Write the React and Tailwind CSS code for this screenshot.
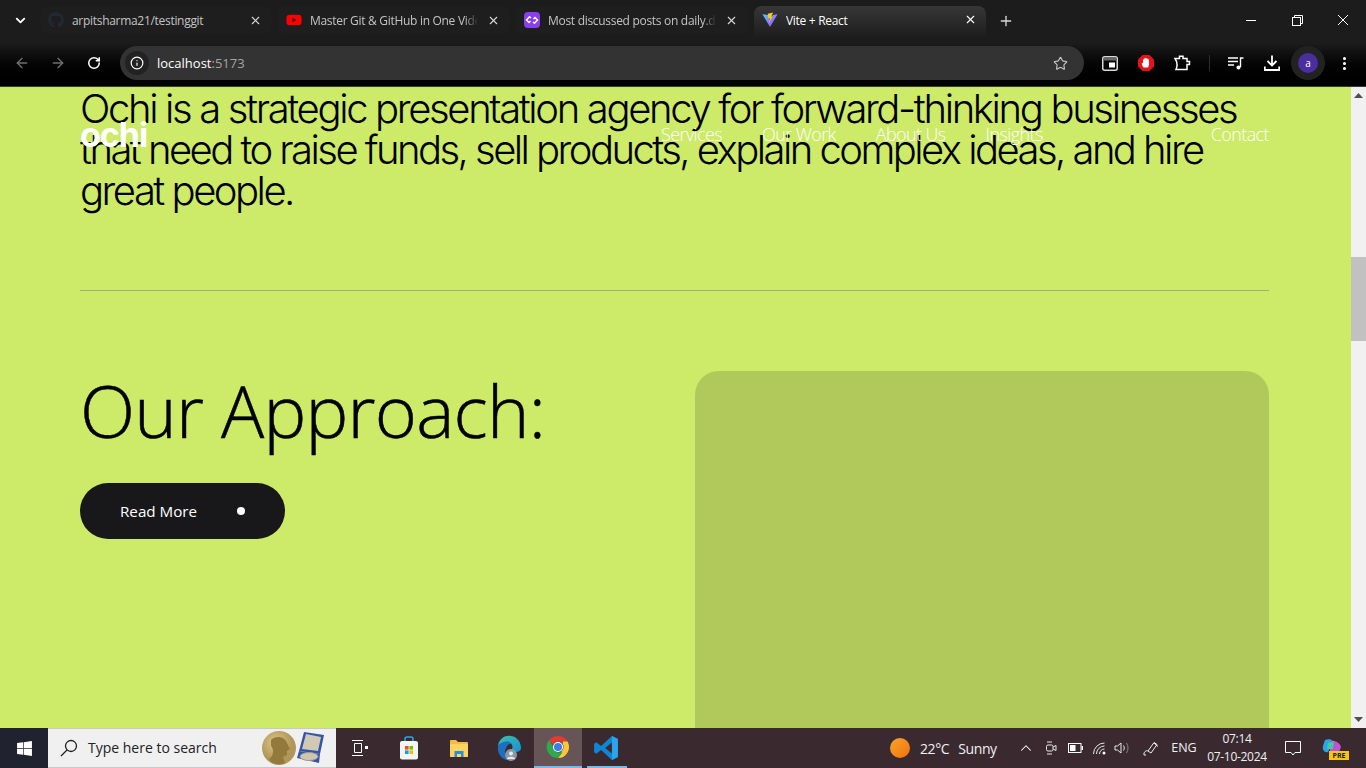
import React from "react";
import { ChevronDown, X, Plus, ArrowLeft, ArrowRight, RotateCw, Info, Star, ChevronUp, EllipsisVertical } from "lucide-react";
import { FaGithub, FaYoutube, FaWindows } from "react-icons/fa";

const ui = { fontFamily: '"Open Sans","Noto Sans",sans-serif' };

function Tab({ title, icon, active, fade }) {
  return (
    <div className={`relative w-[232px] shrink-0 flex pl-[8px] rounded-t-[8px] mt-[6px] ${active ? "h-[34px] items-start pt-[6px] pr-[9px] bg-gradient-to-b from-[#373737] to-[#1b1b1b]" : "h-[28px] items-center pr-[10px] rounded-b-[8px] bg-[#1e1e1e]"}`}>
      <span className="w-[16px] h-[16px] flex items-center justify-center shrink-0">{icon}</span>
      <span className={`ml-[8px] text-[12px] leading-[16px] tracking-[-0.3px] whitespace-nowrap overflow-hidden flex-1 pt-[1px] ${active ? "text-white" : "text-[#c4c4c4]"} ${fade ? "mr-[3px] [mask-image:linear-gradient(to_right,#000_92%,transparent)]" : ""}`}>{title}</span>
      <X size={13} strokeWidth={2} className={`ml-[6px] shrink-0 ${active ? "text-white mt-[1px]" : "text-[#d8d8d8]"}`} />
    </div>
  );
}

function Vite() {
  return (
    <svg width="18" height="18" viewBox="0 0 18 18">
      <path d="M0.5 2.5 L9 17 L17.5 2.5 L12 3.5 L9 10 L7 3.5 Z" fill="url(#vg)" />
      <path d="M6.5 2 L12.5 0.5 L10.5 5 L12 5 L8 12 L8.8 7 L7 7 Z" fill="#ffc81e" />
      <defs>
        <linearGradient id="vg" x1="0" y1="0" x2="1" y2="1">
          <stop offset="0" stopColor="#41d1ff" />
          <stop offset="1" stopColor="#bd34fe" />
        </linearGradient>
      </defs>
    </svg>
  );
}

function Daily() {
  return (
    <svg width="16" height="16" viewBox="0 0 16 16">
      <rect width="16" height="16" rx="4" fill="#8b3df0" />
      <path d="M7 6 L5.5 4.8 L2.5 8 L5 10.5 L6.5 9 M9 10 L10.5 11.2 L13.5 8 L11 5.5 L9.5 7" fill="none" stroke="#fff" strokeWidth="1.5" />
    </svg>
  );
}

function Chrome({ size = 24 }) {
  return (
    <svg width={size} height={size} viewBox="0 0 24 24">
      <path d="M12 1a11 11 0 0 1 9.53 5.5H12a5.5 5.5 0 0 0-5 3.2L3.2 5A11 11 0 0 1 12 1z" fill="#e33b2e" />
      <path d="M21.53 6.5A11 11 0 0 1 12 23l4.76-8.25A5.5 5.5 0 0 0 16.8 9.2L16.76 6.5z" fill="#fcc934" />
      <path d="M12 23A11 11 0 0 1 3.2 5L7.9 13.5a5.5 5.5 0 0 0 4.1 4h4.76z" fill="#2fa84f" />
      <circle cx="12" cy="12" r="5" fill="#fff" />
      <circle cx="12" cy="12" r="4" fill="#3b7de8" />
    </svg>
  );
}

function VSCode() {
  return (
    <svg width="26" height="26" viewBox="0 0 24 24">
      <path d="M17.5 1 L23 3.6 V20.4 L17.5 23 L7.5 13.8 L3 17.3 L1 16 V8 L3 6.7 L7.5 10.2 Z M17.5 7 L11.2 12 L17.5 17 Z" fill="#0e86d4" />
      <path d="M17.5 1 L23 3.6 V20.4 L17.5 23 Z" fill="#2aa5ec" />
    </svg>
  );
}

function Edge() {
  return (
    <svg width="26" height="28" viewBox="0 0 26 28">
      <path d="M2 12 C3 4 10 1 15 2 C22 3 25 9 25 14 C25 17 22 18 19 18 C17 18 15 17 16 15 C18 11 14 7 10 8 C6 9 3 11 2 12 Z" fill="url(#eg)" />
      <path d="M2 12 C1 20 6 26 12 26 C9 23 8 18 10 14 C11 11 14 9 16 10 C13 6 5 7 2 12 Z" fill="#1d6fc4" />
      <circle cx="15" cy="21" r="6" fill="#8b98a4" />
      <circle cx="15" cy="19.5" r="2" fill="#e8eaec" />
      <path d="M11 25 C11 22 19 22 19 25 Z" fill="#e8eaec" />
      <defs>
        <linearGradient id="eg" x1="0" y1="0" x2="1" y2="1">
          <stop offset="0" stopColor="#36c5a8" />
          <stop offset="1" stopColor="#1a8ed8" />
        </linearGradient>
      </defs>
    </svg>
  );
}

function Store() {
  return (
    <svg width="20" height="24" viewBox="0 0 20 24">
      <path d="M6 6 V3 a2 2 0 0 1 2-2 h4 a2 2 0 0 1 2 2 V6" fill="none" stroke="#29a8e8" strokeWidth="1.5" />
      <rect x="1" y="5" width="18" height="18.5" rx="2" fill="#f4f4f4" />
      <rect x="6" y="10" width="3.6" height="3.6" fill="#f25022" />
      <rect x="10.4" y="10" width="3.6" height="3.6" fill="#7fba00" />
      <rect x="6" y="14.4" width="3.6" height="3.6" fill="#00a4ef" />
      <rect x="10.4" y="14.4" width="3.6" height="3.6" fill="#ffb900" />
    </svg>
  );
}

function Folder() {
  return (
    <svg width="20" height="19" viewBox="0 0 20 19">
      <path d="M1 2 a1 1 0 0 1 1-1 h5 l2 2 h9 a1 1 0 0 1 1 1 v13 a1 1 0 0 1-1 1 H2 a1 1 0 0 1-1-1 Z" fill="#f3bc3e" />
      <rect x="1" y="5" width="18" height="13" rx="1" fill="#fbd462" />
      <path d="M5.5 18 v-6 h9 v6 h-2.5 v-3 h-4 v3 Z" fill="#2a8fd8" />
    </svg>
  );
}

function Medal() {
  return (
    <svg width="64" height="34" viewBox="0 0 64 34" className="shrink-0">
      <circle cx="18" cy="17" r="17" fill="url(#mg)" />
      <path d="M10 9 C14 4 24 5 26 12 L29 18 L26 20 L26 24 L22 26 L24 32 C16 35 10 32 8 28 C13 25 13 18 10 15 Z" fill="#94793c" />
      <path d="M43 1 L63 4 L59 23 L38 20 Z" fill="#3356a8" />
      <path d="M45 3 L60 6 L57 20 L41 18 Z" fill="#d3c8b4" />
      <path d="M38 20 L59 23 L58 32 L36 27 Z" fill="#3356a8" />
      <ellipse cx="48" cy="25.5" rx="9" ry="4" fill="#cfc6b2" stroke="#a09880" />
      <defs>
        <radialGradient id="mg" cx="0.4" cy="0.35"><stop offset="0" stopColor="#dcc888" /><stop offset="1" stopColor="#b09658" /></radialGradient>
      </defs>
    </svg>
  );
}

function Slot({ w, children, cls = "" }) {
  return <div className={`relative flex items-center justify-center h-full shrink-0 ${cls}`} style={{ width: w }}>{children}</div>;
}

function BrowserChrome() {
  return (
    <header className="h-[87px] shrink-0 bg-gradient-to-b from-[#1c1c1c] via-[#1c1c1c] to-[#000000] border-b border-[#3a3a3a]" style={ui}>
      <div className="h-[40px] flex">
        <div className="w-[40px] flex items-center justify-center pt-[1px]"><ChevronDown size={15} strokeWidth={3} className="text-white" /></div>
        <div className="flex gap-[6px]">
          <Tab title="arpitsharma21/testinggit" icon={<FaGithub size={16} className="text-[#1f2a36]" />} />
          <Tab fade title="Master Git & GitHub in One Video" icon={<FaYoutube size={18} className="text-[#ff0000]" />} />
          <Tab fade title="Most discussed posts on daily.dev" icon={<Daily />} />
          <Tab active title="Vite + React" icon={<Vite />} />
        </div>
        <div className="ml-[12px] flex items-center pt-[1px]"><Plus size={16} strokeWidth={2} className="text-[#d8d8d8]" /></div>
        <div className="ml-auto flex items-center text-white">
          <Slot w={46}><span className="w-[10px] h-[1px] bg-white" /></Slot>
          <Slot w={46}>
            <svg width="11" height="11" viewBox="0 0 11 11" fill="none" stroke="#fff"><rect x="0.5" y="2.5" width="8" height="8" /><path d="M2.5 2.5 V0.5 H10.5 V8.5 H8.5" /></svg>
          </Slot>
          <Slot w={46}><svg width="12" height="12" viewBox="0 0 12 12" stroke="#fff" fill="none"><path d="M1 1 L11 11 M11 1 L1 11" /></svg></Slot>
        </div>
      </div>
      <div className="h-[46px] flex items-center">
        <div className="w-[120px] h-full flex items-center">
          <ArrowLeft size={16} strokeWidth={2} className="ml-[14px] text-[#6f6f6f]" />
          <ArrowRight size={16} strokeWidth={2} className="ml-[20px] text-[#6f6f6f]" />
          <RotateCw size={14} strokeWidth={2.6} className="ml-[21px] text-white" />
        </div>
        <div className="w-[964px] h-[34px] rounded-full bg-[#333333] flex items-center pl-[5px] pr-[16px]">
          <div className="w-[24px] h-[24px] rounded-full bg-[#222222] flex items-center justify-center"><Info size={14} strokeWidth={2} className="text-white" /></div>
          <span className="ml-[8px] text-[13px] leading-none text-white">localhost<span className="text-[#a5a5a5]">:5173</span></span>
          <Star size={15} strokeWidth={1.8} className="ml-auto text-[#c8c8c8]" />
        </div>
        <div className="flex-1 h-full flex items-center text-white">
          <Slot w={52}>
            <svg width="16" height="15" viewBox="0 0 16 15"><rect x="0.75" y="0.75" width="14.5" height="13.5" rx="2" fill="none" stroke="#d8d8d8" strokeWidth="1.5" /><rect x="1.5" y="1.5" width="13" height="3" fill="#666" /><rect x="7" y="6.5" width="6" height="5" fill="#fff" /></svg>
          </Slot>
          <Slot w={20}>
            <svg width="18" height="18" viewBox="0 0 18 18"><path d="M5.5 1 H12.5 L17 5.5 V12.5 L12.5 17 H5.5 L1 12.5 V5.5 Z" fill="#e8121a" /><path d="M6 13 L4.5 9.5 L6 9 V5.5 H7 V4.5 H8.2 V4 H9.4 V4.5 H10.6 V5.5 H12 V11 L11 13.5 H7 Z" fill="#fff" /></svg>
          </Slot>
          <Slot w={53}>
            <svg width="17" height="16" viewBox="0 0 17 16" fill="none" stroke="#fff" strokeWidth="1.5"><path d="M1 3.5 H5.5 V1.2 H9 V3.5 H13 V6.5 H15.5 V9.5 H13 V14.5 H2 C3.5 11 3.5 7 1 3.5 Z" /></svg>
          </Slot>
          <div className="w-[1px] h-[16px] bg-[#2e2e2e]" />
          <Slot w={52}>
            <svg width="16" height="13" viewBox="0 0 16 13" fill="none" stroke="#fff" strokeWidth="1.4"><path d="M0 1 H10 M0 4.5 H10 M0 8 H6" /><path d="M12.5 10 V1 H15.5" /><circle cx="10.5" cy="10.5" r="2" fill="#fff" stroke="none" /></svg>
          </Slot>
          <Slot w={20}>
            <svg width="16" height="16" viewBox="0 0 16 16" fill="none" stroke="#fff" strokeWidth="1.8"><path d="M8 0.5 V10 M3.5 6 L8 10.5 L12.5 6 M0.8 11.5 V15 H15.2 V11.5" /></svg>
          </Slot>
          <Slot w={52}>
            <div className="w-[34px] h-[34px] rounded-full bg-[#222222] flex items-center justify-center">
              <div className="w-[20px] h-[20px] rounded-full bg-[#4a2ea0] flex items-center justify-center text-[10px] text-white leading-none">a</div>
            </div>
          </Slot>
          <Slot w={20}><EllipsisVertical size={17} strokeWidth={2.4} /></Slot>
        </div>
      </div>
    </header>
  );
}

function Page() {
  return (
    <main className="relative flex-1 min-h-0 overflow-hidden bg-[#cdea68] flex">
      <div className="flex-1 min-w-0 pl-[80px] pr-[82px]">
        <h1 className="pt-[1px] text-[40px] leading-[41px] text-black font-light whitespace-nowrap" style={{ fontFamily: 'Inter,"Liberation Sans",sans-serif' }}>
          <span className="block tracking-[-2.35px]">Ochi is a strategic presentation agency for forward-thinking businesses</span>
          <span className="block tracking-[-2.55px]">that need to raise funds, sell products, explain complex ideas, and hire</span>
          <span className="block tracking-[-2.5px]">great people.</span>
        </h1>
        <div className="mt-[79px] h-[1px] bg-[#a3ae74]" />
        <div className="mt-[80px] flex justify-between" style={ui}>
          <div>
            <h2 className="text-[72px] leading-[78px] font-light tracking-[-0.8px] text-black [-webkit-text-stroke:0.5px_#000]">Our Approach:</h2>
            <button className="mt-[34px] w-[205px] h-[56px] rounded-full bg-[#18181a] text-white flex items-center pl-[40px] pr-[40px] justify-between text-[15.2px]">
              <span>Read More</span>
              <span className="w-[8px] h-[8px] rounded-full bg-white" />
            </button>
          </div>
          <div className="w-[574px] h-[500px] rounded-[24px] bg-[#b1c95a]" />
        </div>
      </div>
      <nav className="absolute left-0 top-[28px] w-[1351px] pl-[80px] pr-[82px] flex items-center text-white" style={ui}>
        <span className="w-[68px] text-[34px] leading-[40px] font-bold tracking-[-1px]" style={{ fontFamily: "Inter,sans-serif" }}>ochi</span>
        <div className="ml-[513px] -mt-[2px] flex gap-[40px] text-[18px] font-light leading-[24px] tracking-[-0.6px]">
          <span>Services</span><span>Our Work</span><span>About Us</span><span>Insights</span>
        </div>
        <span className="ml-auto -mt-[2px] text-[18px] font-light leading-[24px] tracking-[-0.6px]">Contact</span>
      </nav>
      <div className="w-[15px] shrink-0 bg-[#f1f1f1] flex flex-col items-center relative">
        <svg width="9" height="5" viewBox="0 0 9 5" className="mt-[6px]"><path d="M4.5 0 L9 5 H0 Z" fill="#505050" /></svg>
        <div className="mt-[159px] w-full h-[84px] bg-[#c1c1c1]" />
        <svg width="9" height="5" viewBox="0 0 9 5" className="mt-auto mb-[6px]"><path d="M4.5 5 L9 0 H0 Z" fill="#505050" /></svg>
      </div>
    </main>
  );
}

function Taskbar() {
  return (
    <footer className="h-[40px] shrink-0 bg-[#3a2a30] flex items-center text-white" style={ui}>
      <Slot w={48} cls="bg-[#20232f]"><FaWindows size={17} /></Slot>
      <div className="w-[288px] h-full bg-[#f0f0f0] border-y border-[#c8c8c8] flex items-center pl-[12px] text-[#222]">
        <svg width="18" height="18" viewBox="0 0 18 18" fill="none" stroke="#222" strokeWidth="1.3" className="shrink-0"><circle cx="11" cy="7" r="5.5" /><path d="M7 11 L1 17" /></svg>
        <span className="ml-[10px] text-[14px] leading-none">Type here to search</span>
        <span className="ml-auto mr-[11px] flex"><Medal /></span>
      </div>
      <Slot w={48}>
        <svg width="16" height="16" viewBox="0 0 16 16" fill="none" stroke="#fff"><path d="M0 .5 H11 M2.5 3.5 H9.5 V12.5 H2.5 Z M0 15.5 H11" /><rect x="13" y="6" width="3" height="3" fill="#fff" stroke="none" /></svg>
      </Slot>
      <Slot w={50}><Store /></Slot>
      <Slot w={50}><Folder /></Slot>
      <Slot w={50}><Edge /></Slot>
      <Slot w={48} cls="bg-[#665457] border-b-2 border-[#76b9ed]"><Chrome /></Slot>
      <Slot w={48}>
        <VSCode />
        <span className="absolute bottom-0 left-[5px] right-[3px] h-[2px] bg-[#76b9ed]" />
      </Slot>
      <div className="w-[280px] shrink-0 flex items-center h-full justify-end">
        <span className="w-[20px] h-[20px] rounded-full bg-gradient-to-br from-[#f8a52a] to-[#f0700c]" />
      </div>
      <div className="ml-[10px] w-[76px] text-[14px] flex gap-[9px] tracking-[-0.4px] text-[#f0f0f0] whitespace-nowrap"><span>22°C</span><span>Sunny</span></div>
      <Slot w={36} cls="ml-[12px]"><ChevronUp size={18} strokeWidth={1.4} /></Slot>
      <Slot w={14}>
        <svg width="12" height="16" viewBox="0 0 12 16" fill="none" stroke="#e8e8e8"><rect x="1.5" y="5" width="6.5" height="6" rx="1.5" /><path d="M8 7 L11 5.5 V10.5 L8 9 M2 2 H7 M2 14 H7" /></svg>
      </Slot>
      <Slot w={34}>
        <svg width="15" height="10" viewBox="0 0 15 10" fill="none" stroke="#fff"><rect x="0.5" y="0.5" width="12.5" height="9" /><rect x="2" y="2" width="5.5" height="6" fill="#fff" stroke="none" /><rect x="13.5" y="3" width="1.5" height="4" fill="#fff" stroke="none" /></svg>
      </Slot>
      <Slot w={16}>
        <svg width="14" height="13" viewBox="0 0 14 13" fill="none" stroke="#e8e8e8"><path d="M0.5 12 A11 11 0 0 1 11.5 1 M3.5 12 A8 8 0 0 1 11.5 4 M6.5 12 A5 5 0 0 1 11.5 7" /><circle cx="11" cy="11" r="1.5" fill="#fff" stroke="none" /></svg>
      </Slot>
      <Slot w={28}>
        <svg width="16" height="14" viewBox="0 0 16 14" fill="none" stroke="#e8e8e8"><path d="M1 5 H3.5 L7 2 V12 L3.5 9 H1 Z M9.5 4.5 C10.5 6 10.5 8 9.5 9.5" /><path d="M12.5 2 C14.5 5 14.5 9 12.5 12" stroke="#8a8084" /></svg>
      </Slot>
      <Slot w={30}>
        <svg width="16" height="16" viewBox="0 0 16 16" fill="none" stroke="#eee"><path d="M1 15 C0.5 12 3 10 5 11 L11 2.5 L14 4.5 L8 13 L5 11 M3 15 L1 15 M11 3 L15 6.5" /></svg>
      </Slot>
      <div className="w-[36px] text-[12.5px] text-center text-[#f0f0f0]">ENG</div>
      <div className="w-[70px] text-[12px] leading-[18px] tracking-[-0.3px] text-center text-[#f0f0f0]"><div>07:14</div><div>07-10-2024</div></div>
      <Slot w={42}>
        <svg width="16" height="15" viewBox="0 0 16 15" fill="none" stroke="#fff"><path d="M0.5 0.5 H15.5 V11.5 H10 L8 14 L6 11.5 H0.5 Z" /></svg>
      </Slot>
      <Slot w={36}>
        <svg width="20" height="20" viewBox="0 0 20 20"><path d="M3 2 C8 0 12 2 10 6 L6 14 C3 15 0 12 1 8 Z" fill="#2aa5ec" /><path d="M8 3 C13 2 18 5 19 9 L17 14 L8 14 Z" fill="#c052d8" /><path d="M6 5 L12 3 L11 11 L5 11 Z" fill="#48c89c" /></svg>
        <span className="absolute left-[15px] top-[23px] w-[20px] h-[9px] bg-[#f5c518] text-[#222] text-[7px] leading-[9px] font-bold text-center">PRE</span>
      </Slot>
    </footer>
  );
}

export default function App() {
  return (
    <div className="h-screen w-full overflow-hidden flex flex-col">
      <BrowserChrome />
      <Page />
      <Taskbar />
    </div>
  );
}
